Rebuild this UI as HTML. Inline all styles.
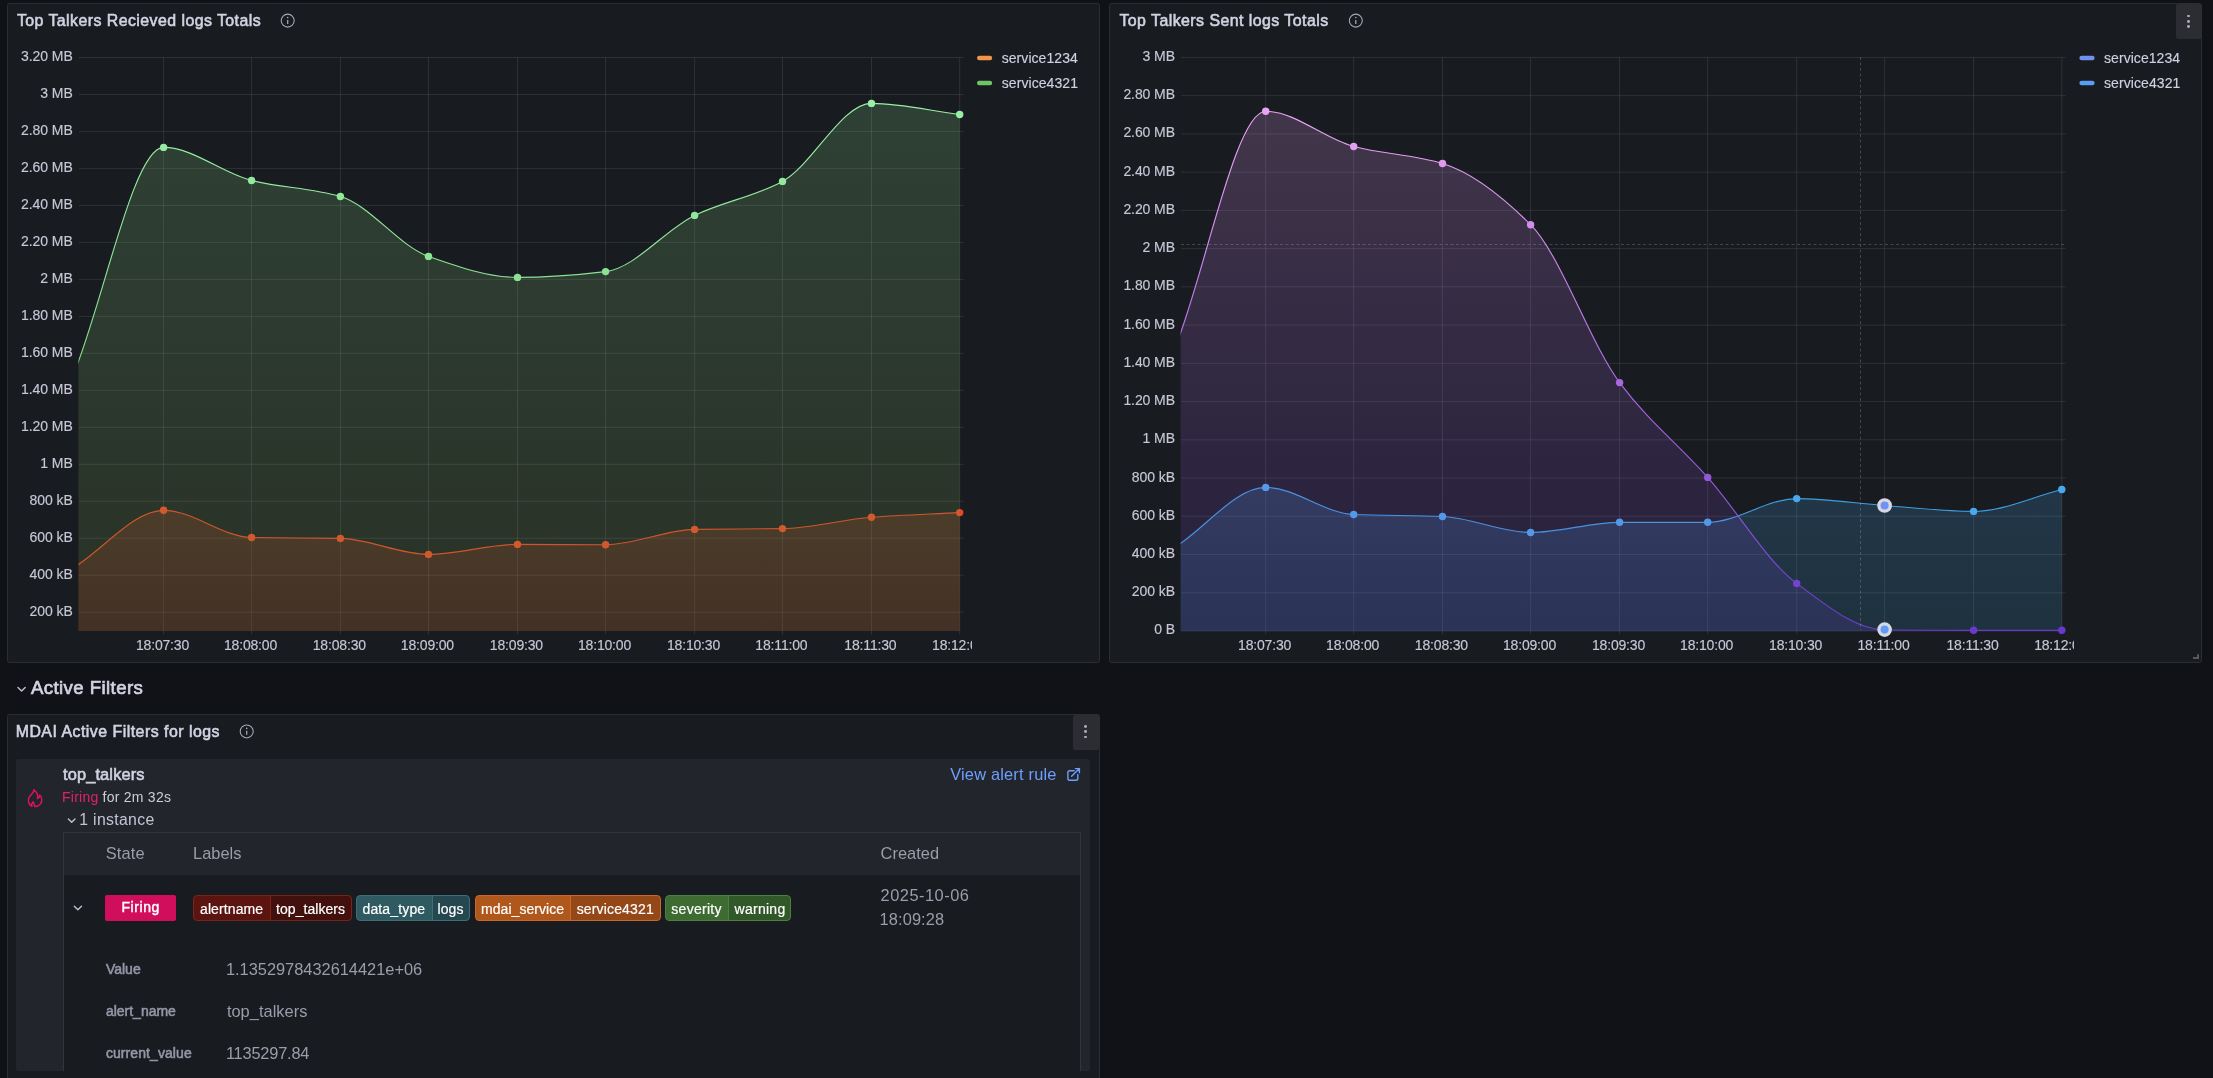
<!DOCTYPE html><html><head><meta charset="utf-8"><title>Dashboard</title><style>
html,body{margin:0;padding:0;background:#111217;}body{width:2213px;height:1078px;overflow:hidden;position:relative;font-family:"Liberation Sans", sans-serif;color:#ccccdc;}
.panel{position:absolute;box-sizing:border-box;background:#181b1f;border:1px solid #2b2d33;border-radius:2.5px;}
.menu{position:absolute;background:#2c2d32;border-radius:2px;}
.dot{position:absolute;width:2.9px;height:2.9px;border-radius:50%;background:#acacbc;}
.tag{position:absolute;box-sizing:border-box;height:26px;top:895px;border-radius:4px;overflow:hidden;}
svg{position:absolute;left:0;top:0;overflow:visible}
</style></head><body><div id="root" style="position:absolute;left:0;top:0;width:2213px;height:1078px;will-change:transform">
<div class="panel" style="left:7px;top:3px;width:1093px;height:660px"></div>
<div class="panel" style="left:1109px;top:3px;width:1093px;height:660px"></div>
<div class="panel" style="left:7px;top:714px;width:1093px;height:400px"></div>
<svg width="2213" height="1078" viewBox="0 0 2213 1078">
<defs>
<linearGradient id="gG" gradientUnits="userSpaceOnUse" x1="0" y1="100" x2="0" y2="631"><stop offset="0" stop-color="#98f0a4"/><stop offset="1" stop-color="#74c474"/></linearGradient>
<linearGradient id="gGf" gradientUnits="userSpaceOnUse" x1="0" y1="100" x2="0" y2="631"><stop offset="0" stop-color="#95ea9b" stop-opacity="0.18"/><stop offset="1" stop-color="#799647" stop-opacity="0.18"/></linearGradient>
<linearGradient id="gOf" gradientUnits="userSpaceOnUse" x1="0" y1="510" x2="0" y2="631"><stop offset="0" stop-color="#e15020" stop-opacity="0.2"/><stop offset="1" stop-color="#b6161c" stop-opacity="0.2"/></linearGradient>
<linearGradient id="gP" gradientUnits="userSpaceOnUse" x1="0" y1="111" x2="0" y2="631"><stop offset="0" stop-color="#eaa4f4"/><stop offset="0.25" stop-color="#cf8aea"/><stop offset="0.55" stop-color="#a766e0"/><stop offset="0.8" stop-color="#8450d4"/><stop offset="1" stop-color="#6a38cc"/></linearGradient>
<linearGradient id="gPf" gradientUnits="userSpaceOnUse" x1="0" y1="111" x2="0" y2="631"><stop offset="0" stop-color="#eaa4f4" stop-opacity="0.2"/><stop offset="0.5" stop-color="#a766e0" stop-opacity="0.18"/><stop offset="1" stop-color="#6a38cc" stop-opacity="0.17"/></linearGradient>
<linearGradient id="gBf" gradientUnits="userSpaceOnUse" x1="0" y1="485" x2="0" y2="631"><stop offset="0" stop-color="#4aa4ee" stop-opacity="0.2"/><stop offset="1" stop-color="#38a0d8" stop-opacity="0.17"/></linearGradient>
<clipPath id="c1"><rect x="78.4" y="50" width="890" height="581"/></clipPath>
<clipPath id="c2"><rect x="1180.6" y="50" width="890" height="581"/></clipPath>
</defs>
<path d="M79.0,57.5H963.6M79.0,94.48H963.6M79.0,131.46H963.6M79.0,168.44H963.6M79.0,205.42H963.6M79.0,242.4H963.6M79.0,279.38H963.6M79.0,316.36H963.6M79.0,353.34H963.6M79.0,390.32H963.6M79.0,427.3H963.6M79.0,464.28H963.6M79.0,501.26H963.6M79.0,538.24H963.6M79.0,575.22H963.6M79.0,612.2H963.6M163.6,57.5V634.5M251.6,57.5V634.5M340.4,57.5V634.5M428.5,57.5V634.5M517.5,57.5V634.5M605.6,57.5V634.5M694.6,57.5V634.5M782.5,57.5V634.5M871.5,57.5V634.5M959.7,57.5V634.5" stroke="rgba(204,204,220,0.12)" stroke-width="1" fill="none"/>
<path d="M75.16,566.70C104.64,547.90 134.12,510.30 163.60,510.30C192.93,510.30 222.27,536.92 251.60,537.50C281.20,538.08 310.80,537.83 340.40,538.40C369.77,538.96 399.13,554.40 428.50,554.40C458.17,554.40 487.83,544.40 517.50,544.40C546.87,544.40 576.23,544.70 605.60,544.70C635.27,544.70 664.93,529.91 694.60,529.40C723.90,528.89 753.20,529.10 782.50,528.60C812.17,528.10 841.83,519.53 871.50,517.30C900.90,515.09 930.30,514.17 959.70,512.60L959.70,631.0L75.16,631.0Z" fill="url(#gOf)" clip-path="url(#c1)"/>
<path d="M75.16,566.70C104.64,547.90 134.12,510.30 163.60,510.30C192.93,510.30 222.27,536.92 251.60,537.50C281.20,538.08 310.80,537.83 340.40,538.40C369.77,538.96 399.13,554.40 428.50,554.40C458.17,554.40 487.83,544.40 517.50,544.40C546.87,544.40 576.23,544.70 605.60,544.70C635.27,544.70 664.93,529.91 694.60,529.40C723.90,528.89 753.20,529.10 782.50,528.60C812.17,528.10 841.83,519.53 871.50,517.30C900.90,515.09 930.30,514.17 959.70,512.60" fill="none" stroke="#e04422" stroke-width="1.15" clip-path="url(#c1)"/>
<circle cx="163.60" cy="510.30" r="3.7" fill="#e24824"/>
<circle cx="251.60" cy="537.50" r="3.7" fill="#e24824"/>
<circle cx="340.40" cy="538.40" r="3.7" fill="#e24824"/>
<circle cx="428.50" cy="554.40" r="3.7" fill="#e24824"/>
<circle cx="517.50" cy="544.40" r="3.7" fill="#e24824"/>
<circle cx="605.60" cy="544.70" r="3.7" fill="#e24824"/>
<circle cx="694.60" cy="529.40" r="3.7" fill="#e24824"/>
<circle cx="782.50" cy="528.60" r="3.7" fill="#e24824"/>
<circle cx="871.50" cy="517.30" r="3.7" fill="#e24824"/>
<circle cx="959.70" cy="512.60" r="3.7" fill="#e24824"/>
<path d="M75.16,370.00C104.64,295.80 134.12,147.40 163.60,147.40C192.93,147.40 222.27,173.35 251.60,180.50C281.20,187.72 310.80,188.06 340.40,196.50C369.77,204.87 399.13,246.10 428.50,256.40C458.17,266.80 487.83,277.40 517.50,277.40C546.87,277.40 576.23,275.10 605.60,271.60C635.27,268.07 664.93,229.63 694.60,215.40C723.90,201.35 753.20,197.11 782.50,181.40C812.17,165.49 841.83,103.40 871.50,103.40C900.90,103.40 930.30,110.80 959.70,114.50L959.70,631.0L75.16,631.0Z" fill="url(#gGf)" clip-path="url(#c1)"/>
<path d="M75.16,370.00C104.64,295.80 134.12,147.40 163.60,147.40C192.93,147.40 222.27,173.35 251.60,180.50C281.20,187.72 310.80,188.06 340.40,196.50C369.77,204.87 399.13,246.10 428.50,256.40C458.17,266.80 487.83,277.40 517.50,277.40C546.87,277.40 576.23,275.10 605.60,271.60C635.27,268.07 664.93,229.63 694.60,215.40C723.90,201.35 753.20,197.11 782.50,181.40C812.17,165.49 841.83,103.40 871.50,103.40C900.90,103.40 930.30,110.80 959.70,114.50" fill="none" stroke="url(#gG)" stroke-width="1.15" clip-path="url(#c1)"/>
<circle cx="163.60" cy="147.40" r="3.7" fill="#95eca0"/>
<circle cx="251.60" cy="180.50" r="3.7" fill="#93e99d"/>
<circle cx="340.40" cy="196.50" r="3.7" fill="#91e89b"/>
<circle cx="428.50" cy="256.40" r="3.7" fill="#8de396"/>
<circle cx="517.50" cy="277.40" r="3.7" fill="#8ce194"/>
<circle cx="605.60" cy="271.60" r="3.7" fill="#8ce294"/>
<circle cx="694.60" cy="215.40" r="3.7" fill="#90e69a"/>
<circle cx="782.50" cy="181.40" r="3.7" fill="#92e99d"/>
<circle cx="871.50" cy="103.40" r="3.7" fill="#98f0a4"/>
<circle cx="959.70" cy="114.50" r="3.7" fill="#97efa3"/>
<path d="M1181.1,57.4H2065.7M1181.1,95.64H2065.7M1181.1,133.88H2065.7M1181.1,172.12H2065.7M1181.1,210.36H2065.7M1181.1,248.6H2065.7M1181.1,286.84H2065.7M1181.1,325.08H2065.7M1181.1,363.32H2065.7M1181.1,401.56H2065.7M1181.1,439.8H2065.7M1181.1,478.04H2065.7M1181.1,516.28H2065.7M1181.1,554.52H2065.7M1181.1,592.76H2065.7M1181.1,631.0H2065.7M1265.7,57.4V634.5M1353.7,57.4V634.5M1442.5,57.4V634.5M1530.6,57.4V634.5M1619.6,57.4V634.5M1707.7,57.4V634.5M1796.7,57.4V634.5M1884.6,57.4V634.5M1973.6,57.4V634.5M2061.8,57.4V634.5" stroke="rgba(204,204,220,0.12)" stroke-width="1" fill="none"/>
<path d="M1177.26,545.80C1206.74,526.33 1236.22,487.40 1265.70,487.40C1295.03,487.40 1324.37,513.27 1353.70,514.50C1383.30,515.74 1412.90,515.31 1442.50,516.50C1471.87,517.68 1501.23,532.50 1530.60,532.50C1560.27,532.50 1589.93,522.30 1619.60,522.30C1648.97,522.30 1678.33,522.30 1707.70,522.30C1737.37,522.30 1767.03,498.60 1796.70,498.60C1826.00,498.60 1855.30,503.39 1884.60,505.50C1914.27,507.63 1943.93,511.40 1973.60,511.40C2003.00,511.40 2032.40,496.80 2061.80,489.50L2061.80,631.0L1177.26,631.0Z" fill="url(#gBf)" clip-path="url(#c2)"/>
<path d="M1177.26,545.80C1206.74,526.33 1236.22,487.40 1265.70,487.40C1295.03,487.40 1324.37,513.27 1353.70,514.50C1383.30,515.74 1412.90,515.31 1442.50,516.50C1471.87,517.68 1501.23,532.50 1530.60,532.50C1560.27,532.50 1589.93,522.30 1619.60,522.30C1648.97,522.30 1678.33,522.30 1707.70,522.30C1737.37,522.30 1767.03,498.60 1796.70,498.60C1826.00,498.60 1855.30,503.39 1884.60,505.50C1914.27,507.63 1943.93,511.40 1973.60,511.40C2003.00,511.40 2032.40,496.80 2061.80,489.50" fill="none" stroke="#3d9fe2" stroke-width="1.15" clip-path="url(#c2)"/>
<circle cx="1265.70" cy="487.40" r="3.7" fill="#49a8ec"/>
<circle cx="1353.70" cy="514.50" r="3.7" fill="#49a8ec"/>
<circle cx="1442.50" cy="516.50" r="3.7" fill="#49a8ec"/>
<circle cx="1530.60" cy="532.50" r="3.7" fill="#49a8ec"/>
<circle cx="1619.60" cy="522.30" r="3.7" fill="#49a8ec"/>
<circle cx="1707.70" cy="522.30" r="3.7" fill="#49a8ec"/>
<circle cx="1796.70" cy="498.60" r="3.7" fill="#49a8ec"/>
<circle cx="1884.60" cy="505.50" r="3.7" fill="#49a8ec"/>
<circle cx="1973.60" cy="511.40" r="3.7" fill="#49a8ec"/>
<circle cx="2061.80" cy="489.50" r="3.7" fill="#49a8ec"/>
<path d="M1177.26,342.00C1206.74,265.10 1236.22,111.30 1265.70,111.30C1295.03,111.30 1324.37,138.90 1353.70,146.50C1383.30,154.17 1412.90,154.61 1442.50,163.50C1471.87,172.32 1501.23,195.40 1530.60,224.70C1560.27,254.30 1589.93,342.87 1619.60,382.60C1648.97,421.92 1678.33,444.20 1707.70,477.40C1737.37,510.94 1767.03,561.65 1796.70,583.40C1826.00,604.88 1855.30,629.80 1884.60,630.00C1914.27,630.20 1943.93,630.30 1973.60,630.30C2003.00,630.30 2032.40,630.30 2061.80,630.30L2061.80,631.0L1177.26,631.0Z" fill="url(#gPf)" clip-path="url(#c2)"/>
<path d="M1177.26,342.00C1206.74,265.10 1236.22,111.30 1265.70,111.30C1295.03,111.30 1324.37,138.90 1353.70,146.50C1383.30,154.17 1412.90,154.61 1442.50,163.50C1471.87,172.32 1501.23,195.40 1530.60,224.70C1560.27,254.30 1589.93,342.87 1619.60,382.60C1648.97,421.92 1678.33,444.20 1707.70,477.40C1737.37,510.94 1767.03,561.65 1796.70,583.40C1826.00,604.88 1855.30,629.80 1884.60,630.00C1914.27,630.20 1943.93,630.30 1973.60,630.30C2003.00,630.30 2032.40,630.30 2061.80,630.30" fill="none" stroke="url(#gP)" stroke-width="1.15" clip-path="url(#c2)"/>
<circle cx="1265.70" cy="111.30" r="3.7" fill="#eaa4f4"/>
<circle cx="1353.70" cy="146.50" r="3.7" fill="#e39df1"/>
<circle cx="1442.50" cy="163.50" r="3.7" fill="#df9af0"/>
<circle cx="1530.60" cy="224.70" r="3.7" fill="#d28deb"/>
<circle cx="1619.60" cy="382.60" r="3.7" fill="#ab69e1"/>
<circle cx="1707.70" cy="477.40" r="3.7" fill="#9158d9"/>
<circle cx="1796.70" cy="583.40" r="3.7" fill="#7643d0"/>
<circle cx="1884.60" cy="630.00" r="3.7" fill="#6a38cc"/>
<circle cx="1973.60" cy="630.30" r="3.7" fill="#6a38cc"/>
<circle cx="2061.80" cy="630.30" r="3.7" fill="#6a38cc"/>
<path d="M1860.5,57V630" stroke="rgba(204,204,220,0.24)" stroke-width="1" stroke-dasharray="3,2.5" fill="none"/>
<path d="M1181,244.5H2066" stroke="rgba(204,204,220,0.24)" stroke-width="1" stroke-dasharray="3,2.5" fill="none"/>
<circle cx="1884.6" cy="505.5" r="5.7" fill="#7092f2" stroke="#d8d8e4" stroke-width="3.3"/>
<circle cx="1884.6" cy="629.6" r="5.7" fill="#5f9cf6" stroke="#d8d8e4" stroke-width="3.3"/>
<rect x="977" y="55.8" width="15.2" height="4.4" rx="2.2" fill="#f2944a"/>
<rect x="977" y="80.8" width="15.2" height="4.4" rx="2.2" fill="#6fc468"/>
<rect x="2079.4" y="55.8" width="15.2" height="4.4" rx="2.2" fill="#7290f0"/>
<rect x="2079.4" y="80.8" width="15.2" height="4.4" rx="2.2" fill="#5a9cf4"/>
<path d="M2193,657H2197V654.2H2199V659H2193Z" fill="#58585c"/>
<g stroke="#a8a8b8" fill="none" stroke-width="1.05"><circle cx="287.7" cy="20.6" r="6.5"/><path d="M287.7,20.0V23.900000000000002" stroke-width="1.25"/></g><circle cx="287.7" cy="17.6" r="0.8" fill="#a8a8b8"/>
<g stroke="#a8a8b8" fill="none" stroke-width="1.05"><circle cx="1355.8" cy="20.6" r="6.5"/><path d="M1355.8,20.0V23.900000000000002" stroke-width="1.25"/></g><circle cx="1355.8" cy="17.6" r="0.8" fill="#a8a8b8"/>
<g stroke="#a8a8b8" fill="none" stroke-width="1.05"><circle cx="246.7" cy="731.4" r="6.5"/><path d="M246.7,730.8V734.6999999999999" stroke-width="1.25"/></g><circle cx="246.7" cy="728.4" r="0.8" fill="#a8a8b8"/>
</svg>
<div style="position:absolute;left:21.08px;top:46px;line-height:20px;font-size:14.0px;color:#c7c7d6;white-space:nowrap;letter-spacing:-0.080px;-webkit-text-stroke:0.15px #c7c7d6;">3.20 MB</div>
<div style="position:absolute;left:40.30px;top:83px;line-height:20px;font-size:14.0px;color:#c7c7d6;white-space:nowrap;letter-spacing:-0.080px;-webkit-text-stroke:0.15px #c7c7d6;">3 MB</div>
<div style="position:absolute;left:21.08px;top:120px;line-height:20px;font-size:14.0px;color:#c7c7d6;white-space:nowrap;letter-spacing:-0.080px;-webkit-text-stroke:0.15px #c7c7d6;">2.80 MB</div>
<div style="position:absolute;left:21.08px;top:157px;line-height:20px;font-size:14.0px;color:#c7c7d6;white-space:nowrap;letter-spacing:-0.080px;-webkit-text-stroke:0.15px #c7c7d6;">2.60 MB</div>
<div style="position:absolute;left:21.08px;top:194px;line-height:20px;font-size:14.0px;color:#c7c7d6;white-space:nowrap;letter-spacing:-0.080px;-webkit-text-stroke:0.15px #c7c7d6;">2.40 MB</div>
<div style="position:absolute;left:21.08px;top:231px;line-height:20px;font-size:14.0px;color:#c7c7d6;white-space:nowrap;letter-spacing:-0.080px;-webkit-text-stroke:0.15px #c7c7d6;">2.20 MB</div>
<div style="position:absolute;left:40.30px;top:268px;line-height:20px;font-size:14.0px;color:#c7c7d6;white-space:nowrap;letter-spacing:-0.080px;-webkit-text-stroke:0.15px #c7c7d6;">2 MB</div>
<div style="position:absolute;left:21.08px;top:305px;line-height:20px;font-size:14.0px;color:#c7c7d6;white-space:nowrap;letter-spacing:-0.080px;-webkit-text-stroke:0.15px #c7c7d6;">1.80 MB</div>
<div style="position:absolute;left:21.08px;top:342px;line-height:20px;font-size:14.0px;color:#c7c7d6;white-space:nowrap;letter-spacing:-0.080px;-webkit-text-stroke:0.15px #c7c7d6;">1.60 MB</div>
<div style="position:absolute;left:21.08px;top:379px;line-height:20px;font-size:14.0px;color:#c7c7d6;white-space:nowrap;letter-spacing:-0.080px;-webkit-text-stroke:0.15px #c7c7d6;">1.40 MB</div>
<div style="position:absolute;left:21.08px;top:416px;line-height:20px;font-size:14.0px;color:#c7c7d6;white-space:nowrap;letter-spacing:-0.080px;-webkit-text-stroke:0.15px #c7c7d6;">1.20 MB</div>
<div style="position:absolute;left:40.30px;top:453px;line-height:20px;font-size:14.0px;color:#c7c7d6;white-space:nowrap;letter-spacing:-0.080px;-webkit-text-stroke:0.15px #c7c7d6;">1 MB</div>
<div style="position:absolute;left:29.55px;top:490px;line-height:20px;font-size:14.0px;color:#c7c7d6;white-space:nowrap;letter-spacing:-0.080px;-webkit-text-stroke:0.15px #c7c7d6;">800 kB</div>
<div style="position:absolute;left:29.55px;top:527px;line-height:20px;font-size:14.0px;color:#c7c7d6;white-space:nowrap;letter-spacing:-0.080px;-webkit-text-stroke:0.15px #c7c7d6;">600 kB</div>
<div style="position:absolute;left:29.55px;top:564px;line-height:20px;font-size:14.0px;color:#c7c7d6;white-space:nowrap;letter-spacing:-0.080px;-webkit-text-stroke:0.15px #c7c7d6;">400 kB</div>
<div style="position:absolute;left:29.55px;top:601px;line-height:20px;font-size:14.0px;color:#c7c7d6;white-space:nowrap;letter-spacing:-0.080px;-webkit-text-stroke:0.15px #c7c7d6;">200 kB</div>
<div style="position:absolute;left:1142.60px;top:46px;line-height:20px;font-size:14.0px;color:#c7c7d6;white-space:nowrap;letter-spacing:-0.080px;-webkit-text-stroke:0.15px #c7c7d6;">3 MB</div>
<div style="position:absolute;left:1123.38px;top:84px;line-height:20px;font-size:14.0px;color:#c7c7d6;white-space:nowrap;letter-spacing:-0.080px;-webkit-text-stroke:0.15px #c7c7d6;">2.80 MB</div>
<div style="position:absolute;left:1123.38px;top:122px;line-height:20px;font-size:14.0px;color:#c7c7d6;white-space:nowrap;letter-spacing:-0.080px;-webkit-text-stroke:0.15px #c7c7d6;">2.60 MB</div>
<div style="position:absolute;left:1123.38px;top:161px;line-height:20px;font-size:14.0px;color:#c7c7d6;white-space:nowrap;letter-spacing:-0.080px;-webkit-text-stroke:0.15px #c7c7d6;">2.40 MB</div>
<div style="position:absolute;left:1123.38px;top:199px;line-height:20px;font-size:14.0px;color:#c7c7d6;white-space:nowrap;letter-spacing:-0.080px;-webkit-text-stroke:0.15px #c7c7d6;">2.20 MB</div>
<div style="position:absolute;left:1142.60px;top:237px;line-height:20px;font-size:14.0px;color:#c7c7d6;white-space:nowrap;letter-spacing:-0.080px;-webkit-text-stroke:0.15px #c7c7d6;">2 MB</div>
<div style="position:absolute;left:1123.38px;top:275px;line-height:20px;font-size:14.0px;color:#c7c7d6;white-space:nowrap;letter-spacing:-0.080px;-webkit-text-stroke:0.15px #c7c7d6;">1.80 MB</div>
<div style="position:absolute;left:1123.38px;top:314px;line-height:20px;font-size:14.0px;color:#c7c7d6;white-space:nowrap;letter-spacing:-0.080px;-webkit-text-stroke:0.15px #c7c7d6;">1.60 MB</div>
<div style="position:absolute;left:1123.38px;top:352px;line-height:20px;font-size:14.0px;color:#c7c7d6;white-space:nowrap;letter-spacing:-0.080px;-webkit-text-stroke:0.15px #c7c7d6;">1.40 MB</div>
<div style="position:absolute;left:1123.38px;top:390px;line-height:20px;font-size:14.0px;color:#c7c7d6;white-space:nowrap;letter-spacing:-0.080px;-webkit-text-stroke:0.15px #c7c7d6;">1.20 MB</div>
<div style="position:absolute;left:1142.60px;top:428px;line-height:20px;font-size:14.0px;color:#c7c7d6;white-space:nowrap;letter-spacing:-0.080px;-webkit-text-stroke:0.15px #c7c7d6;">1 MB</div>
<div style="position:absolute;left:1131.85px;top:467px;line-height:20px;font-size:14.0px;color:#c7c7d6;white-space:nowrap;letter-spacing:-0.080px;-webkit-text-stroke:0.15px #c7c7d6;">800 kB</div>
<div style="position:absolute;left:1131.85px;top:505px;line-height:20px;font-size:14.0px;color:#c7c7d6;white-space:nowrap;letter-spacing:-0.080px;-webkit-text-stroke:0.15px #c7c7d6;">600 kB</div>
<div style="position:absolute;left:1131.85px;top:543px;line-height:20px;font-size:14.0px;color:#c7c7d6;white-space:nowrap;letter-spacing:-0.080px;-webkit-text-stroke:0.15px #c7c7d6;">400 kB</div>
<div style="position:absolute;left:1131.85px;top:581px;line-height:20px;font-size:14.0px;color:#c7c7d6;white-space:nowrap;letter-spacing:-0.080px;-webkit-text-stroke:0.15px #c7c7d6;">200 kB</div>
<div style="position:absolute;left:1154.18px;top:619px;line-height:20px;font-size:14.0px;color:#c7c7d6;white-space:nowrap;letter-spacing:-0.080px;-webkit-text-stroke:0.15px #c7c7d6;">0 B</div>
<div style="position:absolute;left:0;top:0;width:972px;height:670px;overflow:hidden">
<div style="position:absolute;left:135.94px;top:635px;line-height:20px;font-size:14.0px;color:#c7c7d6;white-space:nowrap;letter-spacing:-0.170px;-webkit-text-stroke:0.15px #c7c7d6;">18:07:30</div>
<div style="position:absolute;left:223.94px;top:635px;line-height:20px;font-size:14.0px;color:#c7c7d6;white-space:nowrap;letter-spacing:-0.170px;-webkit-text-stroke:0.15px #c7c7d6;">18:08:00</div>
<div style="position:absolute;left:312.74px;top:635px;line-height:20px;font-size:14.0px;color:#c7c7d6;white-space:nowrap;letter-spacing:-0.170px;-webkit-text-stroke:0.15px #c7c7d6;">18:08:30</div>
<div style="position:absolute;left:400.84px;top:635px;line-height:20px;font-size:14.0px;color:#c7c7d6;white-space:nowrap;letter-spacing:-0.170px;-webkit-text-stroke:0.15px #c7c7d6;">18:09:00</div>
<div style="position:absolute;left:489.84px;top:635px;line-height:20px;font-size:14.0px;color:#c7c7d6;white-space:nowrap;letter-spacing:-0.170px;-webkit-text-stroke:0.15px #c7c7d6;">18:09:30</div>
<div style="position:absolute;left:577.94px;top:635px;line-height:20px;font-size:14.0px;color:#c7c7d6;white-space:nowrap;letter-spacing:-0.170px;-webkit-text-stroke:0.15px #c7c7d6;">18:10:00</div>
<div style="position:absolute;left:666.94px;top:635px;line-height:20px;font-size:14.0px;color:#c7c7d6;white-space:nowrap;letter-spacing:-0.170px;-webkit-text-stroke:0.15px #c7c7d6;">18:10:30</div>
<div style="position:absolute;left:755.36px;top:635px;line-height:20px;font-size:14.0px;color:#c7c7d6;white-space:nowrap;letter-spacing:-0.170px;-webkit-text-stroke:0.15px #c7c7d6;">18:11:00</div>
<div style="position:absolute;left:844.36px;top:635px;line-height:20px;font-size:14.0px;color:#c7c7d6;white-space:nowrap;letter-spacing:-0.170px;-webkit-text-stroke:0.15px #c7c7d6;">18:11:30</div>
<div style="position:absolute;left:932.04px;top:635px;line-height:20px;font-size:14.0px;color:#c7c7d6;white-space:nowrap;letter-spacing:-0.170px;-webkit-text-stroke:0.15px #c7c7d6;">18:12:00</div>
</div>
<div style="position:absolute;left:0;top:0;width:2074px;height:670px;overflow:hidden">
<div style="position:absolute;left:1238.04px;top:635px;line-height:20px;font-size:14.0px;color:#c7c7d6;white-space:nowrap;letter-spacing:-0.170px;-webkit-text-stroke:0.15px #c7c7d6;">18:07:30</div>
<div style="position:absolute;left:1326.04px;top:635px;line-height:20px;font-size:14.0px;color:#c7c7d6;white-space:nowrap;letter-spacing:-0.170px;-webkit-text-stroke:0.15px #c7c7d6;">18:08:00</div>
<div style="position:absolute;left:1414.84px;top:635px;line-height:20px;font-size:14.0px;color:#c7c7d6;white-space:nowrap;letter-spacing:-0.170px;-webkit-text-stroke:0.15px #c7c7d6;">18:08:30</div>
<div style="position:absolute;left:1502.94px;top:635px;line-height:20px;font-size:14.0px;color:#c7c7d6;white-space:nowrap;letter-spacing:-0.170px;-webkit-text-stroke:0.15px #c7c7d6;">18:09:00</div>
<div style="position:absolute;left:1591.94px;top:635px;line-height:20px;font-size:14.0px;color:#c7c7d6;white-space:nowrap;letter-spacing:-0.170px;-webkit-text-stroke:0.15px #c7c7d6;">18:09:30</div>
<div style="position:absolute;left:1680.04px;top:635px;line-height:20px;font-size:14.0px;color:#c7c7d6;white-space:nowrap;letter-spacing:-0.170px;-webkit-text-stroke:0.15px #c7c7d6;">18:10:00</div>
<div style="position:absolute;left:1769.04px;top:635px;line-height:20px;font-size:14.0px;color:#c7c7d6;white-space:nowrap;letter-spacing:-0.170px;-webkit-text-stroke:0.15px #c7c7d6;">18:10:30</div>
<div style="position:absolute;left:1857.46px;top:635px;line-height:20px;font-size:14.0px;color:#c7c7d6;white-space:nowrap;letter-spacing:-0.170px;-webkit-text-stroke:0.15px #c7c7d6;">18:11:00</div>
<div style="position:absolute;left:1946.46px;top:635px;line-height:20px;font-size:14.0px;color:#c7c7d6;white-space:nowrap;letter-spacing:-0.170px;-webkit-text-stroke:0.15px #c7c7d6;">18:11:30</div>
<div style="position:absolute;left:2034.14px;top:635px;line-height:20px;font-size:14.0px;color:#c7c7d6;white-space:nowrap;letter-spacing:-0.170px;-webkit-text-stroke:0.15px #c7c7d6;">18:12:00</div>
</div>
<div style="position:absolute;left:1001.70px;top:48px;line-height:20px;font-size:14.0px;color:#d0d0e0;white-space:nowrap;letter-spacing:0.060px;-webkit-text-stroke:0.15px #d0d0e0;">service1234</div>
<div style="position:absolute;left:1001.70px;top:73px;line-height:20px;font-size:14.0px;color:#d0d0e0;white-space:nowrap;letter-spacing:0.080px;-webkit-text-stroke:0.15px #d0d0e0;">service4321</div>
<div style="position:absolute;left:2104.00px;top:48px;line-height:20px;font-size:14.0px;color:#d0d0e0;white-space:nowrap;letter-spacing:0.060px;-webkit-text-stroke:0.15px #d0d0e0;">service1234</div>
<div style="position:absolute;left:2104.00px;top:73px;line-height:20px;font-size:14.0px;color:#d0d0e0;white-space:nowrap;letter-spacing:0.080px;-webkit-text-stroke:0.15px #d0d0e0;">service4321</div>
<div style="position:absolute;left:16.90px;top:10px;line-height:21px;font-size:15.9px;color:#d2d2e2;white-space:nowrap;letter-spacing:0.446px;-webkit-text-stroke:0.6px #d2d2e2;">Top Talkers Recieved logs Totals</div>
<div style="position:absolute;left:1119.40px;top:10px;line-height:21px;font-size:15.9px;color:#d2d2e2;white-space:nowrap;letter-spacing:0.459px;-webkit-text-stroke:0.6px #d2d2e2;">Top Talkers Sent logs Totals</div>
<div style="position:absolute;left:15.70px;top:721px;line-height:21px;font-size:15.9px;color:#d2d2e2;white-space:nowrap;letter-spacing:0.486px;-webkit-text-stroke:0.6px #d2d2e2;">MDAI Active Filters for logs</div>
<div class="menu" style="left:2175.5px;top:4px;width:26px;height:35px"></div>
<div class="dot" style="left:2186.8px;top:14.6px"></div>
<div class="dot" style="left:2186.8px;top:19.7px"></div>
<div class="dot" style="left:2186.8px;top:24.8px"></div>
<div class="menu" style="left:1073px;top:715px;width:26px;height:34.5px"></div>
<div class="dot" style="left:1084.2px;top:725.3px"></div>
<div class="dot" style="left:1084.2px;top:730.4px"></div>
<div class="dot" style="left:1084.2px;top:735.5px"></div>
<svg width="2213" height="1078"><path d="M18,687.4l3.6,3.6l3.6,-3.6" stroke="#c0c0d0" stroke-width="1.4" fill="none" stroke-linecap="round" stroke-linejoin="round"/></svg>
<div style="position:absolute;left:30.90px;top:675px;line-height:25px;font-size:18.6px;color:#d2d2e2;white-space:nowrap;letter-spacing:0.429px;-webkit-text-stroke:0.7px #d2d2e2;">Active Filters</div>
<div style="position:absolute;left:16px;top:759px;width:1073.6px;height:312px;background:#22252b;border-radius:2px"></div>
<div style="position:absolute;box-sizing:border-box;left:63px;top:832px;width:1018px;height:239px;background:#181b1f;border:1px solid #32353c;border-bottom:none"><div style="height:42.3px;background:#22252b"></div></div>
<div style="position:absolute;left:63.00px;top:763px;line-height:22px;font-size:16.4px;color:#d2d2e2;white-space:nowrap;letter-spacing:0.132px;-webkit-text-stroke:0.6px #d2d2e2;">top_talkers</div>
<div style="position:absolute;left:62.00px;top:787px;line-height:20px;font-size:14.0px;color:#ccccdc;white-space:nowrap;letter-spacing:0.242px;"><span style="color:#e0226e">Firing</span> for 2m 32s</div>
<div style="position:absolute;left:79.30px;top:809px;line-height:21px;font-size:15.8px;color:#c4c4d4;white-space:nowrap;letter-spacing:0.319px;">1 instance</div>
<div style="position:absolute;left:950.20px;top:763px;line-height:22px;font-size:16.4px;color:#6e9fff;white-space:nowrap;letter-spacing:0.190px;">View alert rule</div>
<div style="position:absolute;left:105.70px;top:842px;line-height:22px;font-size:16.4px;color:#9c9cac;white-space:nowrap;letter-spacing:0.186px;">State</div>
<div style="position:absolute;left:193.00px;top:842px;line-height:22px;font-size:16.4px;color:#9c9cac;white-space:nowrap;letter-spacing:0.039px;">Labels</div>
<div style="position:absolute;left:880.60px;top:842px;line-height:22px;font-size:16.4px;color:#9c9cac;white-space:nowrap;letter-spacing:0.034px;">Created</div>
<div style="position:absolute;left:880.60px;top:884px;line-height:22px;font-size:16.4px;color:#9c9cac;white-space:nowrap;letter-spacing:0.497px;">2025-10-06</div>
<div style="position:absolute;left:879.60px;top:908px;line-height:22px;font-size:16.4px;color:#9c9cac;white-space:nowrap;letter-spacing:0.102px;">18:09:28</div>
<div style="position:absolute;left:105.90px;top:959px;line-height:20px;font-size:14.0px;color:#9696a7;white-space:nowrap;letter-spacing:0.005px;-webkit-text-stroke:0.55px #9696a7;">Value</div>
<div style="position:absolute;left:105.90px;top:1001px;line-height:20px;font-size:14.0px;color:#9696a7;white-space:nowrap;letter-spacing:-0.006px;-webkit-text-stroke:0.55px #9696a7;">alert_name</div>
<div style="position:absolute;left:105.90px;top:1043px;line-height:20px;font-size:14.0px;color:#9696a7;white-space:nowrap;letter-spacing:0.080px;-webkit-text-stroke:0.55px #9696a7;">current_value</div>
<div style="position:absolute;left:225.90px;top:958px;line-height:22px;font-size:16.4px;color:#9c9cac;white-space:nowrap;letter-spacing:-0.006px;">1.1352978432614421e+06</div>
<div style="position:absolute;left:226.90px;top:1000px;line-height:22px;font-size:16.4px;color:#9c9cac;white-space:nowrap;letter-spacing:0.032px;">top_talkers</div>
<div style="position:absolute;left:225.90px;top:1042px;line-height:22px;font-size:16.4px;color:#9c9cac;white-space:nowrap;letter-spacing:-0.207px;">1135297.84</div>
<svg width="2213" height="1078">
<g transform="translate(26.6,788.9) scale(0.78)" fill="none" stroke="#db1162" stroke-width="1.95" stroke-linejoin="round" stroke-linecap="round"><path d="M9.2,1.2C9.9,4.6 5.2,7.4 3.4,10.6C1.3,14.3 2.1,19.4 6.6,22.3C6.2,20.2 6.5,18.1 8.3,16.4C9.1,18.4 10.3,19.3 10.2,22.6C16.6,22.9 20.6,17.6 19.2,12.1C18.7,10.1 17.6,8.6 16.9,7.9C16.7,9.9 15.6,11.6 13.9,12.2C14.9,8.2 12.9,3.6 9.2,1.2Z"/></g>
<path d="M68.4,818.9l3.3,3.3l3.3,-3.3" stroke="#c0c0d0" stroke-width="1.4" fill="none" stroke-linecap="round" stroke-linejoin="round"/>
<path d="M74.3,906.2l3.6,3.6l3.6,-3.6" stroke="#c0c0d0" stroke-width="1.4" fill="none" stroke-linecap="round" stroke-linejoin="round"/>
<g fill="none" stroke="#6e9fff" stroke-width="1.4" stroke-linecap="round" stroke-linejoin="round"><path d="M1074.2,770.8H1069.7Q1067.9,770.8 1067.9,772.6V778.5Q1067.9,780.3 1069.7,780.3H1076Q1077.8,780.3 1077.8,778.5V774.4"/><path d="M1071.6,776.3L1079.4,768.6M1075.4,768.6H1079.4V772.8"/></g>
</svg>
<div style="position:absolute;left:105px;top:895px;width:71.2px;height:26px;background:#d10e5c;border-radius:2px"></div>
<div style="position:absolute;left:121.40px;top:897px;line-height:20px;font-size:14.0px;color:#ffffff;white-space:nowrap;letter-spacing:0.576px;-webkit-text-stroke:0.45px #ffffff;">Firing</div>
<div class="tag" style="left:193px;width:158.7px;border:1px solid #7a2419;background:linear-gradient(90deg,#5b1410 0,#5b1410 75.6px,#7a2419 75.6px,#7a2419 76.6px,#42100d 76.6px)"></div>
<div style="position:absolute;left:200.00px;top:899px;line-height:20px;font-size:14.0px;color:#ffffff;white-space:nowrap;letter-spacing:0.104px;-webkit-text-stroke:0.2px #ffffff;">alertname</div>
<div style="position:absolute;left:276.10px;top:899px;line-height:20px;font-size:14.0px;color:#ffffff;white-space:nowrap;letter-spacing:0.042px;-webkit-text-stroke:0.2px #ffffff;">top_talkers</div>
<div class="tag" style="left:356px;width:113.9px;border:1px solid #3d6f77;background:linear-gradient(90deg,#305a61 0,#305a61 74.7px,#3d6f77 74.7px,#3d6f77 75.7px,#25474f 75.7px)"></div>
<div style="position:absolute;left:362.50px;top:899px;line-height:20px;font-size:14.0px;color:#ffffff;white-space:nowrap;letter-spacing:0.136px;-webkit-text-stroke:0.2px #ffffff;">data_type</div>
<div style="position:absolute;left:437.50px;top:899px;line-height:20px;font-size:14.0px;color:#ffffff;white-space:nowrap;letter-spacing:0.106px;-webkit-text-stroke:0.2px #ffffff;">logs</div>
<div class="tag" style="left:475px;width:185.6px;border:1px solid #c8682a;background:linear-gradient(90deg,#b0571b 0,#b0571b 94.5px,#c8682a 94.5px,#c8682a 95.5px,#944717 95.5px)"></div>
<div style="position:absolute;left:481.10px;top:899px;line-height:20px;font-size:14.0px;color:#ffffff;white-space:nowrap;letter-spacing:0.037px;-webkit-text-stroke:0.2px #ffffff;">mdai_service</div>
<div style="position:absolute;left:576.70px;top:899px;line-height:20px;font-size:14.0px;color:#ffffff;white-space:nowrap;letter-spacing:0.150px;-webkit-text-stroke:0.2px #ffffff;">service4321</div>
<div class="tag" style="left:665.1px;width:126.0px;border:1px solid #4c8040;background:linear-gradient(90deg,#3d6b32 0,#3d6b32 61.6px,#4c8040 61.6px,#4c8040 62.6px,#305828 62.6px)"></div>
<div style="position:absolute;left:671.30px;top:899px;line-height:20px;font-size:14.0px;color:#ffffff;white-space:nowrap;letter-spacing:0.281px;-webkit-text-stroke:0.2px #ffffff;">severity</div>
<div style="position:absolute;left:734.50px;top:899px;line-height:20px;font-size:14.0px;color:#ffffff;white-space:nowrap;letter-spacing:0.276px;-webkit-text-stroke:0.2px #ffffff;">warning</div>
</div></body></html>
